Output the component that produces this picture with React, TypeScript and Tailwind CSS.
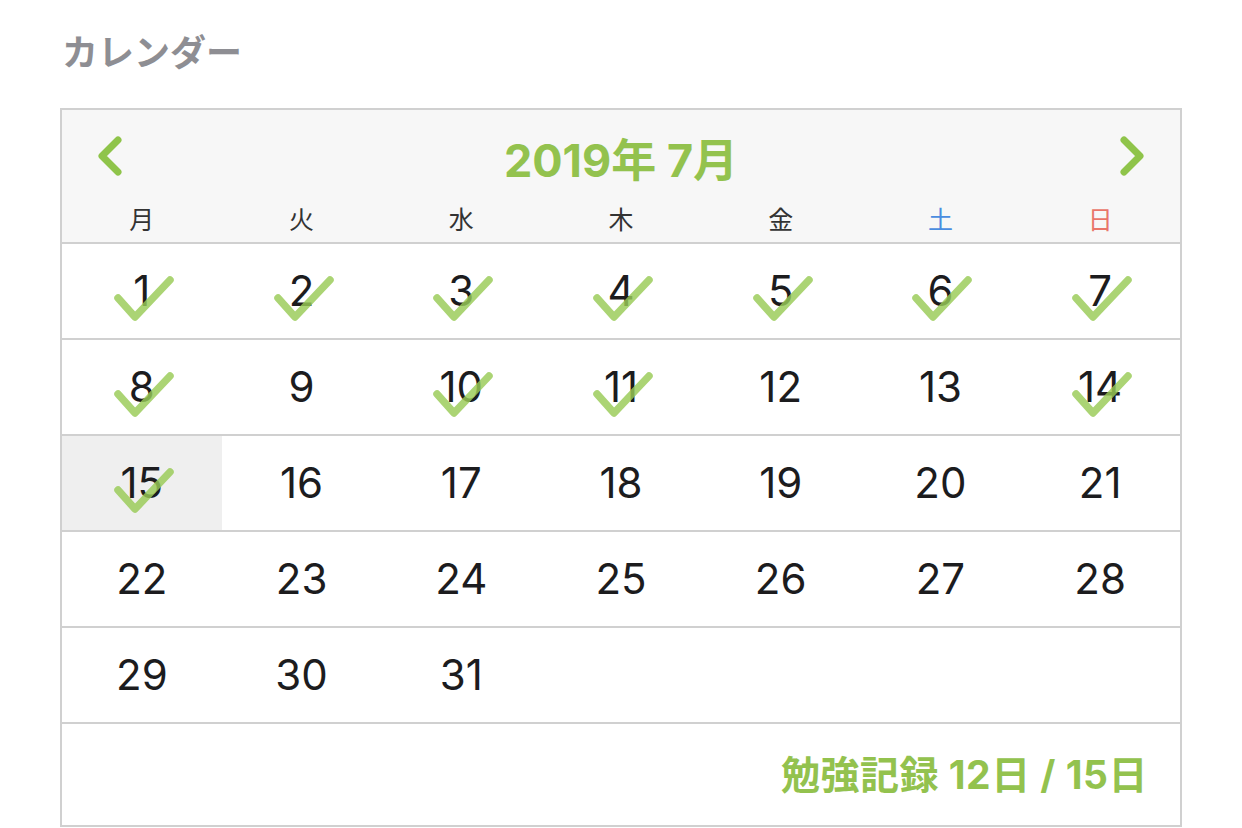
import React from "react";

const FONT = '"Inter", "Noto Sans CJK JP", sans-serif';
const checked = new Set([1, 2, 3, 4, 5, 6, 7, 8, 10, 11, 14, 15]);

function Check() {
  return (
    <svg
      className="absolute left-1/2 top-1/2 pointer-events-none"
      width="80"
      height="60"
      viewBox="-40 -30 80 60"
      style={{ transform: "translate(-50%, -50%)" }}
    >
      <polyline
        points="-24,7 -7,26 28,-11"
        fill="none"
        stroke="#98cb55"
        strokeOpacity="0.82"
        strokeWidth="7.5"
        strokeLinecap="round"
        strokeLinejoin="round"
      />
    </svg>
  );
}

function Chevron({ dir }: { dir: "left" | "right" }) {
  return (
    <svg width="28" height="40" viewBox="0 0 28 40">
      <polyline
        points={dir === "left" ? "22,4 6,20 22,36" : "6,4 22,20 6,36"}
        fill="none"
        stroke="#8fc44a"
        strokeWidth="7"
        strokeLinecap="round"
        strokeLinejoin="round"
      />
    </svg>
  );
}

export default function App() {
  const weekdays = ["月", "火", "水", "木", "金", "土", "日"];
  const days: (number | null)[] = [];
  for (let i = 1; i <= 31; i++) days.push(i);
  while (days.length < 35) days.push(null);
  const rows: (number | null)[][] = [];
  for (let r = 0; r < 5; r++) rows.push(days.slice(r * 7, r * 7 + 7));

  return (
    <div className="w-[1242px] h-[828px] bg-white overflow-hidden" style={{ fontFamily: FONT }}>
      <div className="pl-[62px] pt-[35px] h-[108px]">
        <div className="text-[36px] font-bold leading-none text-[#8e8e93]">カレンダー</div>
      </div>
      <div className="ml-[60px] w-[1122px] border-2 border-[#d0d0d0] border-b-0">
        <div className="bg-[#f7f7f7]">
          <div className="h-[90px] flex items-center justify-between px-[34px] pt-[2px]">
            <Chevron dir="left" />
            <div className="text-[45px] font-bold text-[#93c24e] leading-none pt-[8px]">2019年 7月</div>
            <Chevron dir="right" />
          </div>
          <div className="grid grid-cols-7 h-[42px] items-center pb-[2px]">
            {weekdays.map((w, i) => (
              <div
                key={w}
                className={`text-center text-[25px] leading-none ${
                  i === 5 ? "text-[#4a8de0]" : i === 6 ? "text-[#e9766a]" : "text-[#333333]"
                }`}
              >
                {w}
              </div>
            ))}
          </div>
        </div>
        {rows.map((row, ri) => (
          <div key={ri} className="grid grid-cols-7 h-[96px] border-t-2 border-[#d0d0d0]">
            {row.map((d, ci) => (
              <div
                key={ci}
                className={`relative flex items-center justify-center ${d === 15 ? "bg-[#efefef]" : ""}`}
              >
                {d !== null && (
                  <span className="text-[42px] text-[#1c1c1e] leading-none">{d}</span>
                )}
                {d !== null && checked.has(d) && <Check />}
              </div>
            ))}
          </div>
        ))}
        <div className="h-[105px] border-t-2 border-b-2 border-[#d0d0d0] flex items-center justify-end pr-[32px]">
          <div className="text-[39px] font-bold text-[#93c24e] leading-none tracking-[0.5px]">勉強記録 12日 / 15日</div>
        </div>
      </div>
    </div>
  );
}
